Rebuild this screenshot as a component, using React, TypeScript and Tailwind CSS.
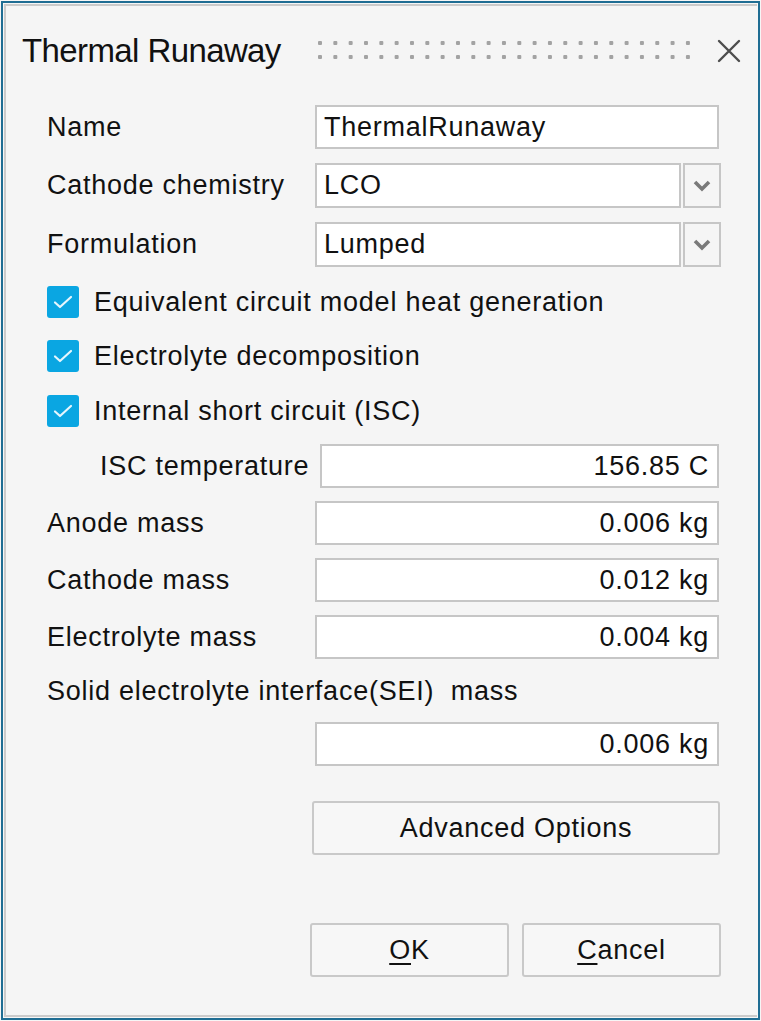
import React from "react";

const font = { fontFamily: '"Liberation Sans", Arial, sans-serif' };

function Dots() {
  const cols = Array.from({ length: 25 }, (_, i) => i);
  return (
    <svg width="380" height="24" viewBox="0 0 380 24">
      {cols.map((i) => (
        <g key={i}>
          <rect x={2 + i * 15.33} y={2} width={4} height={4} rx={1} fill="#a3a3a3" />
          <rect x={2 + i * 15.33} y={16} width={4} height={4} rx={1} fill="#a3a3a3" />
        </g>
      ))}
    </svg>
  );
}

function CloseIcon() {
  return (
    <svg width="24" height="24" viewBox="0 0 24 24">
      <path d="M2 2 L22 22 M22 2 L2 22" stroke="#4d4d4d" strokeWidth="2.4" strokeLinecap="round" />
    </svg>
  );
}

function Chevron() {
  return (
    <svg width="20" height="14" viewBox="0 0 20 14" className="shrink-0">
      <path d="M3 3 L10 10 L17 3" stroke="#7a7a7a" strokeWidth="3.6" fill="none" strokeLinejoin="miter" />
    </svg>
  );
}

function Check() {
  return (
    <div className="w-[32px] h-[32px] rounded-[3px] bg-[#0aa6e2] flex items-center justify-center shrink-0">
      <svg width="20" height="16" viewBox="0 0 20 16">
        <path d="M2 8.5 L7 13 L18 3" stroke="#e6f6fd" strokeWidth="2.2" fill="none" strokeLinecap="round" strokeLinejoin="round" />
      </svg>
    </div>
  );
}

const text = "text-[27px] tracking-[0.75px] text-[#111111] leading-none";

function ValueBox({ value, w = "w-[404px]" }: { value: string; w?: string }) {
  return (
    <div
      className={`${w} h-[44px] bg-white border-2 border-[#c6c6c6] flex items-center justify-end pr-[8px] ${text}`}
    >
      {value}
    </div>
  );
}

export default function App() {
  return (
    <div style={font} className="w-[761px] h-[1021px] bg-[#f6f6f6] p-px">
      <div className="w-full h-full border-2 border-[#1f6d93] p-px">
        <div className="w-full h-full border-l-2 border-t-2 border-b-2 border-[#cbcbcb] bg-[#f5f5f5] flex flex-col">
          {/* Title bar */}
          <div className="h-[50px] mt-[19px] flex items-center">
            <div className="ml-[16px] text-[33px] tracking-[-0.6px] text-[#111111] leading-none w-[290px]">
              Thermal Runaway
            </div>
            <div className="ml-[4px] mt-[1px]">
              <Dots />
            </div>
            <div className="ml-[21px] mt-[1px]">
              <CloseIcon />
            </div>
          </div>

          {/* Name */}
          <div className="mt-[30px] flex items-center h-[44px]">
            <div className={`w-[268px] ml-[41px] ${text}`}>Name</div>
            <div className={`w-[404px] h-[44px] bg-white border-2 border-[#c6c6c6] flex items-center pl-[7px] ${text}`}>
              ThermalRunaway
            </div>
          </div>

          {/* Cathode chemistry */}
          <div className="mt-[14px] flex items-center h-[45px]">
            <div className={`w-[268px] ml-[41px] ${text}`}>Cathode chemistry</div>
            <div className="flex gap-[2px]">
              <div className={`w-[366px] h-[45px] bg-white border-2 border-[#c6c6c6] flex items-center pl-[7px] ${text}`}>
                LCO
              </div>
              <div className="w-[38px] h-[45px] border-2 border-[#c6c6c6] bg-[#f5f5f5] flex items-center justify-center">
                <Chevron />
              </div>
            </div>
          </div>

          {/* Formulation */}
          <div className="mt-[14px] flex items-center h-[45px]">
            <div className={`w-[268px] ml-[41px] ${text}`}>Formulation</div>
            <div className="flex gap-[2px]">
              <div className={`w-[366px] h-[45px] bg-white border-2 border-[#c6c6c6] flex items-center pl-[7px] ${text}`}>
                Lumped
              </div>
              <div className="w-[38px] h-[45px] border-2 border-[#c6c6c6] bg-[#f5f5f5] flex items-center justify-center">
                <Chevron />
              </div>
            </div>
          </div>

          {/* Checkboxes */}
          <div className="mt-[19px] ml-[41px] flex items-center gap-[15px] h-[32px]">
            <Check />
            <div className={text}>Equivalent circuit model heat generation</div>
          </div>
          <div className="mt-[22px] ml-[41px] flex items-center gap-[15px] h-[32px]">
            <Check />
            <div className={text}>Electrolyte decomposition</div>
          </div>
          <div className="mt-[23px] ml-[41px] flex items-center gap-[15px] h-[32px]">
            <Check />
            <div className={text}>Internal short circuit (ISC)</div>
          </div>

          {/* ISC temperature */}
          <div className="mt-[17px] flex items-center h-[44px]">
            <div className={`w-[220px] ml-[94px] ${text}`}>ISC temperature</div>
            <ValueBox value="156.85 C" w="w-[399px]" />
          </div>

          {/* Masses */}
          <div className="mt-[13px] flex items-center h-[44px]">
            <div className={`w-[268px] ml-[41px] ${text}`}>Anode mass</div>
            <ValueBox value="0.006 kg" />
          </div>
          <div className="mt-[13px] flex items-center h-[44px]">
            <div className={`w-[268px] ml-[41px] ${text}`}>Cathode mass</div>
            <ValueBox value="0.012 kg" />
          </div>
          <div className="mt-[13px] flex items-center h-[44px]">
            <div className={`w-[268px] ml-[41px] ${text}`}>Electrolyte mass</div>
            <ValueBox value="0.004 kg" />
          </div>

          {/* SEI */}
          <div className="mt-[17px] h-[30px] flex items-center">
            <div className={`ml-[41px] whitespace-pre ${text}`}>Solid electrolyte interface(SEI)  mass</div>
          </div>
          <div className="mt-[16px] flex h-[44px]">
            <div className="ml-[309px]">
              <ValueBox value="0.006 kg" />
            </div>
          </div>

          {/* Advanced Options */}
          <div className="mt-[35px] flex">
            <button
              className={`ml-[306px] w-[408px] h-[54px] rounded-[3px] border-2 border-[#c9c9c9] bg-[#f7f7f7] flex items-center justify-center ${text}`}
            >
              Advanced Options
            </button>
          </div>

          {/* OK / Cancel */}
          <div className="mt-[68px] flex gap-[13px]">
            <button
              className={`ml-[304px] w-[199px] h-[54px] rounded-[3px] border-2 border-[#c9c9c9] bg-[#f7f7f7] flex items-center justify-center ${text}`}
            >
              <span>
                <span className="underline underline-offset-[4px] decoration-[2px]">O</span>K
              </span>
            </button>
            <button
              className={`w-[199px] h-[54px] rounded-[3px] border-2 border-[#c9c9c9] bg-[#f7f7f7] flex items-center justify-center ${text}`}
            >
              <span>
                <span className="underline underline-offset-[4px] decoration-[2px]">C</span>ancel
              </span>
            </button>
          </div>
        </div>
      </div>
    </div>
  );
}
